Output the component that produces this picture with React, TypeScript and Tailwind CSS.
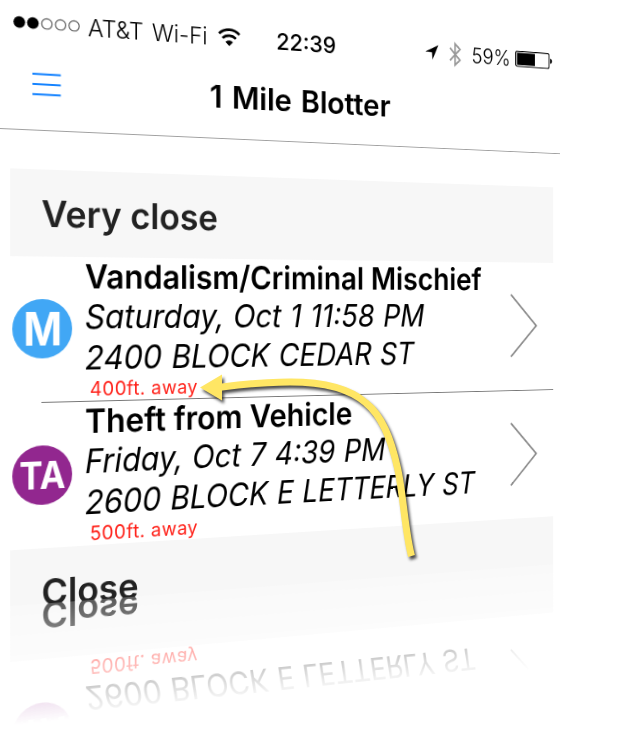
import { useLayoutEffect, useRef, useState } from "react";
import type { ReactNode } from "react";

/** A single line of text stretched horizontally to an exact width. */
function Fit({ width, children }: { width: number; children: ReactNode }) {
  const ref = useRef<HTMLSpanElement>(null);
  const [ratio, setRatio] = useState(1);
  useLayoutEffect(() => {
    if (ref.current) setRatio(width / ref.current.offsetWidth);
  }, [width]);
  return (
    <span
      ref={ref}
      className="inline-block origin-left whitespace-nowrap"
      style={{ transform: `scaleX(${ratio})` }}
    >
      {children}
    </span>
  );
}

function Header() {
  return (
    <header className="h-[129px] w-[640px] border-b border-[#a0a0a0]">
      <div className="flex h-[42px] items-start text-[24px] leading-[43px] text-black">
        <svg className="ml-[12px] h-[42px] w-[68px] shrink-0" viewBox="0 0 68 42">
          {[7, 20.5, 34.5, 48.3, 62].map((x, i) => (
            <circle
              key={x}
              cx={x}
              cy={20.6}
              r={i < 2 ? 5.8 : 5.2}
              fill={i < 2 ? "#000" : "none"}
              stroke={i < 2 ? "none" : "#555"}
              strokeWidth="1.1"
            />
          ))}
        </svg>
        <div className="ml-[8px] w-[133px] font-[350] [word-spacing:2px]">
          <Fit width={127}>AT&amp;T Wi-Fi</Fit>
        </div>
        <svg className="ml-[5px] h-[42px] w-[25px] shrink-0" viewBox="0 0 25 42" fill="none" stroke="#000">
          <path d="M1.2 17.2a16 16 0 0 1 22.6 0" strokeWidth="2.7" />
          <path d="M5.1 21.9a10.6 10.6 0 0 1 14.8 0" strokeWidth="2.7" />
          <path d="M12.5 30l-4.2-4.3a6 6 0 0 1 8.4 0z" fill="#000" stroke="none" />
        </svg>
        <div className="ml-[40px] w-[70px] font-medium">
          <Fit width={69}>22:39</Fit>
        </div>
        <svg className="ml-[106px] h-[42px] w-[17px] shrink-0" viewBox="0 0 17 42">
          <path d="M16.5 12.5L9.2 29.3 8.6 21 0.3 20.5z" fill="#000" />
        </svg>
        <svg className="ml-[13px] h-[42px] w-[15px] shrink-0" viewBox="0 0 15 42" fill="none" stroke="#999" strokeWidth="2">
          <path d="M1 14.5l12.5 13.2-6.2 5.8V9.5l6.2 6L1 28.5" />
        </svg>
        <div className="ml-[13px] w-[54px] font-[350]">
          <Fit width={50}>59%</Fit>
        </div>
        <svg className="ml-[2px] h-[42px] w-[50px] shrink-0" viewBox="0 0 50 42">
          <rect x="0.7" y="12.6" width="43.6" height="17.4" rx="2" fill="#fff" stroke="#000" strokeWidth="1.2" />
          <path d="M2.4 14.3h23.5v14H2.4z" fill="#000" />
          <path d="M46 18.5c3 .5 3 5.5 0 6z" fill="#000" />
        </svg>
      </div>
      <div className="flex h-[86px] items-start">
        <svg className="ml-[31px] h-[86px] w-[30px] shrink-0" viewBox="0 0 30 86" stroke="#1583ff" strokeWidth="2">
          <path d="M1 29.7h28.5M1 39.9h28.5M1 50.2h28.5" />
        </svg>
        <h1 className="ml-[156px] pt-[21px] text-[33px] leading-[43px] font-semibold [word-spacing:2px]">
          <Fit width={208}>1 Mile Blotter</Fit>
        </h1>
      </div>
    </header>
  );
}

function SectionBand({ label, width }: { label: string; width: number }) {
  return (
    <div className="h-[88px] bg-[#f7f7f7] pl-[31px] text-[37px] leading-[89px] font-semibold text-[#222]">
      <Fit width={width}>{label}</Fit>
    </div>
  );
}

interface Incident {
  badge: string;
  title: [string, number];
  when: [string, number];
  where: [string, number];
  distance: [string, number];
}

const incidents: Incident[] = [
  {
    badge: "M",
    title: ["Vandalism/Criminal Mischief", 453],
    when: ["Saturday, Oct 1 11:58 PM", 381],
    where: ["2400 BLOCK CEDAR ST", 369],
    distance: ["400ft. away", 114],
  },
  {
    badge: "TA",
    title: ["Theft from Vehicle", 294],
    when: ["Friday, Oct 7 4:39 PM", 334],
    where: ["2600 BLOCK E LETTERLY ST", 444],
    distance: ["500ft. away", 114],
  },
];

function Badge({ text }: { text: string }) {
  return text === "M" ? (
    <div className="mt-[43px] flex h-[60px] w-[60px] items-center justify-center rounded-full bg-[#41a7f5] text-[46px] leading-none font-bold text-white">
      <div className="w-[39px] pb-px">
        <Fit width={39}>M</Fit>
      </div>
    </div>
  ) : (
    <div className="mt-[43px] flex h-[60px] w-[60px] items-center justify-center rounded-full bg-[#92278f] text-[38px] leading-none font-bold text-white">
      <div className="w-[46px]">
        <Fit width={46}>TA</Fit>
      </div>
    </div>
  );
}

function IncidentRow({ item }: { item: Incident }) {
  return (
    <div className="flex h-[147px] pl-[2px] text-black">
      <Badge text={item.badge} />
      <div className="ml-[13px] w-[489px] text-[34px]">
        <div className="h-[40px] leading-[40px] font-semibold">
          <Fit width={item.title[1]}>{item.title[0]}</Fit>
        </div>
        <div className="h-[41px] leading-[42px] font-[370] italic [word-spacing:1px]">
          <Fit width={item.when[1]}>{item.when[0]}</Fit>
        </div>
        <div className="h-[42px] leading-[43px] font-[370] italic [word-spacing:1px]">
          <Fit width={item.where[1]}>{item.where[0]}</Fit>
        </div>
        <div className="h-[24px] pl-[5px] text-[20px] leading-[25px] tracking-[0.5px] text-[#ff2018]">
          <Fit width={item.distance[1]}>{item.distance[0]}</Fit>
        </div>
      </div>
      <svg className="h-[147px] w-[40px] shrink-0" viewBox="0 0 40 147" fill="none" stroke="#8c8c8c" strokeWidth="2">
        <path d="M1.5 37L34.5 73 1.5 108.5" />
      </svg>
    </div>
  );
}

function Screen() {
  return (
    <div className="h-[607px] w-[640px] overflow-hidden">
      <Header />
      <main className="ml-[10px] w-[621px] pt-[39px]">
        <SectionBand label="Very close" width={185} />
        <IncidentRow item={incidents[0]} />
        <div className="ml-[31px] h-px bg-[#777]" />
        <IncidentRow item={incidents[1]} />
        <SectionBand label="Close" width={100} />
      </main>
    </div>
  );
}

export default function App() {
  return (
    <div className="relative h-[729px] w-[640px] overflow-hidden bg-white font-['Inter','Liberation_Sans',sans-serif]">
      <div className="h-[729px] w-[640px] origin-top-left [transform:matrix3d(1.021,0.0795,0,0.0002607,0,1,0,0,0,0,1,0,0,0,0,1)]">
        <Screen />
        <div
          aria-hidden="true"
          className="h-[130px] overflow-hidden [mask-image:linear-gradient(to_bottom,rgba(0,0,0,0.75),transparent_120px)]"
        >
          <div className="-scale-y-100">
            <Screen />
          </div>
        </div>
      </div>
      <svg
        className="absolute top-0 left-0 h-[729px] w-[640px] [filter:drop-shadow(2px_3px_1.5px_rgba(0,0,0,0.7))]"
        viewBox="0 0 640 729"
      >
        <path
          d="M411.5 556C405 532 403 492 397.5 468C391 438 382 416 366 403C347 386 318 382 290 382C265 382 240 384.5 218 387.5"
          fill="none"
          stroke="#ffe664"
          strokeWidth="7"
        />
        <path d="M200 387.5L222 374.5V400.5z" fill="#ffe664" />
      </svg>
    </div>
  );
}
